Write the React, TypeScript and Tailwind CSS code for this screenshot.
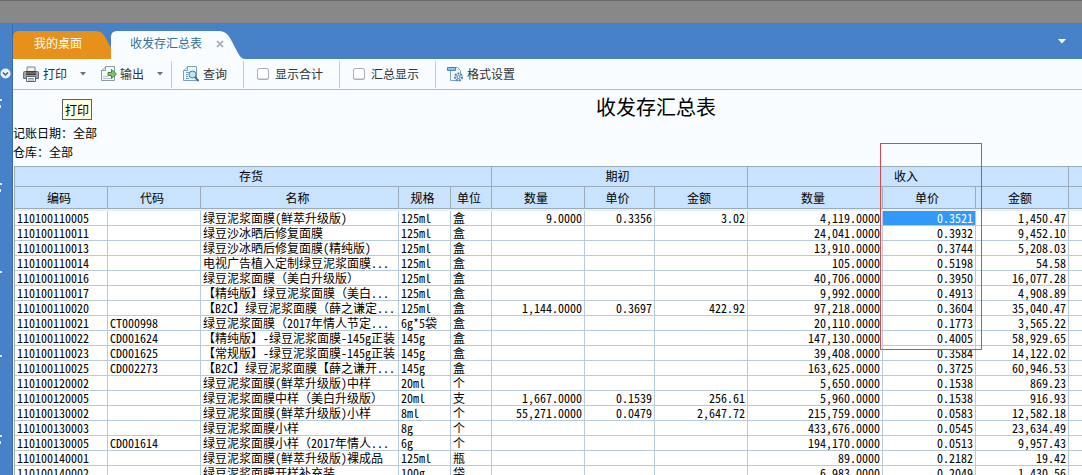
import { useState } from 'react';

type Row = {
  code: string;
  alias?: string;
  name: string;
  spec: string;
  unit: string;
  opening?: [string, string, string];
  income: [string, string, string];
};

const ROWS: Row[] = [
  { code: '110100110005', name: '绿豆泥浆面膜(鲜萃升级版)', spec: '125ml', unit: '盒', opening: ['9.0000', '0.3356', '3.02'], income: ['4,119.0000', '0.3521', '1,450.47'] },
  { code: '110100110011', name: '绿豆沙冰晒后修复面膜', spec: '125ml', unit: '盒', income: ['24,041.0000', '0.3932', '9,452.10'] },
  { code: '110100110013', name: '绿豆沙冰晒后修复面膜(精纯版)', spec: '125ml', unit: '盒', income: ['13,910.0000', '0.3744', '5,208.03'] },
  { code: '110100110014', name: '电视广告植入定制绿豆泥浆面膜...', spec: '125ml', unit: '盒', income: ['105.0000', '0.5198', '54.58'] },
  { code: '110100110016', name: '绿豆泥浆面膜（美白升级版）', spec: '125ml', unit: '盒', income: ['40,706.0000', '0.3950', '16,077.28'] },
  { code: '110100110017', name: '【精纯版】绿豆泥浆面膜（美白...', spec: '125ml', unit: '盒', income: ['9,992.0000', '0.4913', '4,908.89'] },
  { code: '110100110020', name: '【B2C】绿豆泥浆面膜（薛之谦定...', spec: '125ml', unit: '盒', opening: ['1,144.0000', '0.3697', '422.92'], income: ['97,218.0000', '0.3604', '35,040.47'] },
  { code: '110100110021', alias: 'CT000998', name: '绿豆泥浆面膜（2017年情人节定...', spec: '6g*5袋', unit: '盒', income: ['20,110.0000', '0.1773', '3,565.22'] },
  { code: '110100110022', alias: 'CD001624', name: '【精纯版】-绿豆泥浆面膜-145g正装', spec: '145g', unit: '盒', income: ['147,130.0000', '0.4005', '58,929.65'] },
  { code: '110100110023', alias: 'CD001625', name: '【常规版】-绿豆泥浆面膜-145g正装', spec: '145g', unit: '盒', income: ['39,408.0000', '0.3584', '14,122.02'] },
  { code: '110100110025', alias: 'CD002273', name: '【B2C】绿豆泥浆面膜【薛之谦开...', spec: '145g', unit: '盒', income: ['163,625.0000', '0.3725', '60,946.53'] },
  { code: '110100120002', name: '绿豆泥浆面膜(鲜萃升级版)中样', spec: '20ml', unit: '个', income: ['5,650.0000', '0.1538', '869.23'] },
  { code: '110100120005', name: '绿豆泥浆面膜中样（美白升级版）', spec: '20ml', unit: '支', opening: ['1,667.0000', '0.1539', '256.61'], income: ['5,960.0000', '0.1538', '916.93'] },
  { code: '110100130002', name: '绿豆泥浆面膜(鲜萃升级版)小样', spec: '8ml', unit: '个', opening: ['55,271.0000', '0.0479', '2,647.72'], income: ['215,759.0000', '0.0583', '12,582.18'] },
  { code: '110100130003', name: '绿豆泥浆面膜小样', spec: '8g', unit: '个', income: ['433,676.0000', '0.0545', '23,634.49'] },
  { code: '110100130005', alias: 'CD001614', name: '绿豆泥浆面膜小样（2017年情人...', spec: '6g', unit: '个', income: ['194,170.0000', '0.0513', '9,957.43'] },
  { code: '110100140001', name: '绿豆泥浆面膜(鲜萃升级版)裸成品', spec: '125ml', unit: '瓶', income: ['89.0000', '0.2182', '19.42'] },
  { code: '110100140002', name: '绿豆泥浆面膜开样补充装', spec: '100g', unit: '袋', income: ['6,983.0000', '0.2049', '1,430.56'] },
];

const SUB_HEADS = ['编码', '代码', '名称', '规格', '单位', '数量', '单价', '金额', '数量', '单价', '金额'];

function PrintIcon() {
  return (
    <svg width="16" height="16" viewBox="0 0 16 16">
      <path d="M4 1h8v5H4z" fill="#eef1f4" stroke="#7d8790" />
      <path d="M1.5 5.5h13a1 1 0 0 1 1 1v6h-15v-6a1 1 0 0 1 1-1z" fill="#9aa3ac" stroke="#68717a" />
      <path d="M3 5h10v4H3z" fill="#3b3f45" />
      <path d="M3 7h10" stroke="#b9886a" />
      <path d="M3.5 10.5h9v5h-9z" fill="#fff" stroke="#59626b" />
      <path d="M5 12.5h6M5 14h6" stroke="#8793a0" />
    </svg>
  );
}

function ExportIcon() {
  return (
    <svg width="16" height="16" viewBox="0 0 16 16">
      <path d="M4.5.5h9v14H.5v-10z" fill="#f7fafb" stroke="#8d9ba6" />
      <path d="M4.5.5v4h-4" fill="#dfe6ea" stroke="#8d9ba6" />
      <path d="M2 12.5h9M2 10.5h5" stroke="#b4c2cb" />
      <path d="M7 6.5h3.5v-3l5 4.5-5 4.5v-3H7z" fill="#7cc66a" stroke="#3d8a3a" />
    </svg>
  );
}

function QueryIcon() {
  return (
    <svg width="16" height="16" viewBox="0 0 16 16">
      <path d="M4.5.5h9v14H.5v-10z" fill="#eff7fc" stroke="#7fa0b8" />
      <path d="M4.5.5v4h-4" fill="#d5e6f1" stroke="#7fa0b8" />
      <path d="M3 6.5h3M3 8.5h2M3 10.5h2M3 12.5h3" stroke="#5f9cc9" />
      <circle cx="9.5" cy="8.5" r="3.5" fill="#bfe3f7" stroke="#3f7fae" />
      <path d="M12 11l3.5 4" stroke="#4d6f8a" strokeWidth="2" />
    </svg>
  );
}

function FormatIcon() {
  return (
    <svg width="16" height="16" viewBox="0 0 16 16">
      <path d="M3.5 4v10.5h10V4.5l-3-3h-3" fill="#f2f8fc" stroke="#7fa0b8" />
      <path d="M.5 1.5h8v3h-8z" fill="#8cc6ee" stroke="#3f86bb" />
      <circle cx="11.5" cy="11" r="3.5" fill="#e4f1fa" stroke="#4a86b3" strokeWidth="2" strokeDasharray="2 1" />
      <circle cx="11.5" cy="11" r="1.5" fill="#fff" stroke="#4a86b3" />
    </svg>
  );
}

function Caret() {
  return (
    <svg width="6" height="4" viewBox="0 0 6 4">
      <path d="M0 0h6L3 3.5z" fill="#6b7278" />
    </svg>
  );
}

function Divider() {
  return <span className="w-px self-stretch bg-[#c3ccd4] mb-px mt-0.5" />;
}

function SideBar() {
  return (
    <aside className="w-[13px] shrink-0 bg-[#4782c9] border-r border-[#3c6ba8] flex flex-col overflow-hidden">
      <button aria-label="展开" className="mt-[44px] w-[11px]">
        <svg width="11" height="11" viewBox="0 0 11 11">
          <circle cx="5.5" cy="5.5" r="5" fill="#e8f2fb" />
          <path d="M3 4.5l2.5 2.5L8 4.5" fill="none" stroke="#2f5f9c" strokeWidth="1.5" />
        </svg>
      </button>
      {/* tail ends of the collapsed menu labels */}
      <div className="mt-5 flex flex-col gap-[75px]">
        {[0, 1, 2, 3, 4].map(i => (
          <svg key={i} width="2" height="9" viewBox="0 0 2 9">
            <path d={i === 2 || i === 3 ? 'M0 4h2v2H0z' : 'M0 0h2v2H0zM0 6h1v3H0z'} fill="#e4eefa" />
          </svg>
        ))}
      </div>
    </aside>
  );
}

function TabBar() {
  return (
    <div className="flex h-[35px] items-end justify-between bg-[#4782c9]">
      <div className="flex">
        <button className="relative h-7 w-[98px] text-white">
          <svg className="absolute inset-0" width="98" height="28" viewBox="0 0 98 28">
            <path d="M0 28V6Q0 0 6 0H83Q89 0 92 6L98 17V28Z" fill="#e8911a" />
          </svg>
          <span className="relative flex h-6 items-center pb-1 pl-[21px]">我的桌面</span>
        </button>
        <div className="relative flex h-7 w-[134px] text-[#336f98]">
          <svg className="absolute inset-0" width="134" height="28" viewBox="0 0 134 28">
            <path d="M0 28V6Q0 0 6 0H108Q115 0 119 7L127 22Q130 28 134 28Z" fill="#f9fdff" />
          </svg>
          <button className="relative h-6 pl-[19px]">收发存汇总表</button>
          <button aria-label="关闭" className="relative ml-3.5 h-[26px]">
            <svg width="8" height="8" viewBox="0 0 8 8">
              <path d="M1 1l6 6M7 1L1 7" stroke="#b3b7ba" strokeWidth="2" />
            </svg>
          </button>
        </div>
      </div>
      <button aria-label="更多" className="mr-4 h-[35px]">
        <svg width="8" height="5" viewBox="0 0 8 5">
          <path d="M0 0h8L4 4.5z" fill="#fff" />
        </svg>
      </button>
    </div>
  );
}

function CheckItem({ label }: { label: string }) {
  const [on, setOn] = useState(false);
  return (
    <label className="flex w-[95px] items-center gap-1.5 pl-[13px]">
      <input
        type="checkbox"
        checked={on}
        onChange={() => setOn(!on)}
        className="size-3 appearance-none rounded-xs border border-[#a9afb6] bg-white shadow-[inset_0_-1px_1px_#d5d9dd] checked:bg-[#4782c9]"
      />
      {label}
    </label>
  );
}

function ToolBar() {
  return (
    <div className="flex h-[31px] items-center border-b border-[#b4bcc6] bg-[#f9fdff] whitespace-nowrap text-[#333]">
      <div className="relative flex w-20 items-center gap-[13px] pl-2.5">
        <button className="flex items-center gap-1"><PrintIcon />打印</button>
        <button aria-label="打印选项"><Caret /></button>
        <div className="absolute left-[49px] top-[33px] z-10 flex h-[21px] w-[30px] items-center justify-center border border-[#5f5f5f] bg-[#ffffe1] text-black">
          打印
        </div>
      </div>
      <div className="flex w-[78px] items-center gap-[13px] pl-2">
        <button className="flex items-center gap-[3px]"><ExportIcon />输出</button>
        <button aria-label="输出选项"><Caret /></button>
      </div>
      <Divider />
      <div className="w-[71px] pl-[11px]">
        <button className="flex items-center gap-1"><QueryIcon />查询</button>
      </div>
      <Divider />
      <CheckItem label="显示合计" />
      <Divider />
      <CheckItem label="汇总显示" />
      <Divider />
      <button className="flex items-center gap-1 pl-[11px]"><FormatIcon />格式设置</button>
    </div>
  );
}

// hwid would also narrow the full-width brackets, so those get it switched off
function ItemName({ text }: { text: string }) {
  return (
    <>
      {text.split(/([（）])/).map((part, i) =>
        part === '（' || part === '）'
          ? <span key={i} className="[font-feature-settings:normal]">{part}</span>
          : part
      )}
    </>
  );
}

function Amount({ value, selected }: { value?: string; selected?: boolean }) {
  return (
    <td className={selected ? 'border-r border-b border-[#b7cbdd] bg-[#3399f8] pr-0.5 pb-px text-right text-white' : 'border-r border-b border-[#b7cbdd] pr-0.5 pb-px text-right'}>
      {value}
    </td>
  );
}

function ReportTable() {
  return (
    <div className="relative pl-px">
      <table className="w-full min-w-[1068px] table-fixed border-separate border-spacing-0 border-l border-[#9aabba] leading-[13px] whitespace-nowrap">
        <colgroup>
          <col className="w-[93px]" />
          <col className="w-[93px]" />
          <col className="w-[198px]" />
          <col className="w-[52px]" />
          <col className="w-[41px]" />
          <col className="w-[93px]" />
          <col className="w-[70px]" />
          <col className="w-[93px]" />
          <col className="w-[135px]" />
          <col className="w-[93px]" />
          <col className="w-[93px]" />
          <col />
        </colgroup>
        <thead className="bg-[#c9e2fd]">
          <tr className="h-[21px]">
            <th colSpan={5} className="border-y border-r border-[#9aabba] pr-1 pb-0.5 font-normal">存货</th>
            <th colSpan={3} className="border-y border-r border-[#9aabba] pr-1 pb-0.5 font-normal">期初</th>
            <th colSpan={3} className="border-y border-r border-[#9aabba] pr-1 pb-0.5 font-normal">收入</th>
            <th className="border-y border-[#9aabba]" />
          </tr>
          <tr className="h-[22px]">
            {SUB_HEADS.map((h, i) => (
              <th key={i} className="border-r border-b border-[#9aabba] pr-1 font-normal">{h}</th>
            ))}
            <th className="border-b border-[#9aabba]" />
          </tr>
        </thead>
        <tbody className="bg-white">
          <tr className="h-0.5 bg-[#e4f0fa]"><td colSpan={12} /></tr>
          {ROWS.map((r, i) => (
            <tr key={r.code} className="h-[15px]">
              <td className="border-r border-b border-[#b7cbdd] pb-px pl-0.5">{r.code}</td>
              <td className="border-r border-b border-[#b7cbdd] pb-px pl-0.5">{r.alias}</td>
              <td className="border-r border-b border-[#b7cbdd] pb-px pl-0.5"><ItemName text={r.name} /></td>
              <td className="border-r border-b border-[#b7cbdd] pb-px pl-0.5">{r.spec}</td>
              <td className="border-r border-b border-[#b7cbdd] pb-px pl-0.5">{r.unit}</td>
              <Amount value={r.opening?.[0]} />
              <Amount value={r.opening?.[1]} />
              <Amount value={r.opening?.[2]} />
              <Amount value={r.income[0]} />
              <Amount value={r.income[1]} selected={i === 0} />
              <Amount value={r.income[2]} />
              <td className="border-b border-[#b7cbdd]" />
            </tr>
          ))}
        </tbody>
      </table>
      {/* red marker around the income unit price */}
      <div className="pointer-events-none absolute left-[867px] top-[-23px] h-[207px] w-[102px] border border-[#d8484c]" />
    </div>
  );
}

export default function App() {
  return (
    <div className="flex h-screen flex-col overflow-hidden bg-[#f9fdff] font-['Noto_Sans_CJK_SC',sans-serif] text-[12px] leading-4 text-black [font-feature-settings:'hwid']">
      <div className="h-6 shrink-0 border-y border-t-[#6b6b6b] border-b-[#6f7880] bg-[#888]" />
      <div className="flex min-h-0 flex-1">
        <SideBar />
        <main className="min-w-0 flex-1 overflow-hidden">
          <TabBar />
          <ToolBar />
          <h1 className="pt-[3px] pl-[583px] text-[20px] leading-7 whitespace-nowrap">收发存汇总表</h1>
          <div className="pt-0.5 pb-[5px] leading-[19px]">
            <p>记账日期：全部</p>
            <p>仓库：全部</p>
          </div>
          <ReportTable />
        </main>
      </div>
    </div>
  );
}
